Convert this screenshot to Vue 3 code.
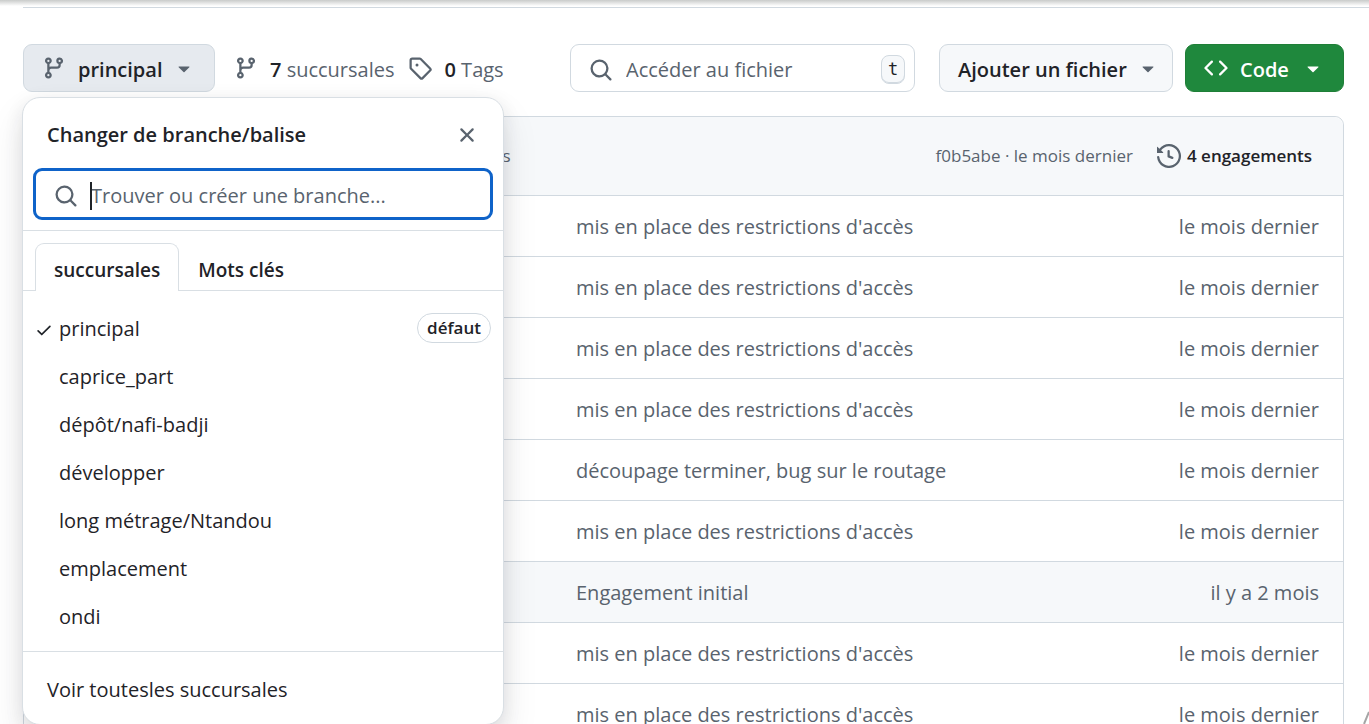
<script setup>
import { ref } from 'vue'

const icons = {
  branch: 'M9.5 3.25a2.25 2.25 0 1 1 3 2.122V6A2.5 2.5 0 0 1 10 8.5H6a1 1 0 0 0-1 1v1.128a2.251 2.251 0 1 1-1.5 0V5.372a2.25 2.25 0 1 1 1.5 0v1.836A2.493 2.493 0 0 1 6 7h4a1 1 0 0 0 1-1v-.628A2.25 2.25 0 0 1 9.5 3.25Zm-6 0a.75.75 0 1 0 1.5 0 .75.75 0 0 0-1.5 0Zm8.25-.75a.75.75 0 1 0 0 1.5.75.75 0 0 0 0-1.5ZM4.25 12a.75.75 0 1 0 0 1.5.75.75 0 0 0 0-1.5Z',
  tag: 'M1 7.775V2.75C1 1.784 1.784 1 2.75 1h5.025c.464 0 .91.184 1.238.513l6.25 6.25a1.75 1.75 0 0 1 0 2.474l-5.026 5.026a1.75 1.75 0 0 1-2.474 0l-6.25-6.25A1.752 1.752 0 0 1 1 7.775Zm1.5 0c0 .066.026.13.073.177l6.25 6.25a.25.25 0 0 0 .354 0l5.025-5.025a.25.25 0 0 0 0-.354l-6.25-6.25a.25.25 0 0 0-.177-.073H2.75a.25.25 0 0 0-.25.25ZM6 5a1 1 0 1 1 0 2 1 1 0 0 1 0-2Z',
  search: 'M10.68 11.74a6 6 0 0 1-7.922-8.982 6 6 0 0 1 8.982 7.922l3.04 3.04a.749.749 0 0 1-.326 1.275.749.749 0 0 1-.734-.215ZM11.5 7a4.499 4.499 0 1 0-8.997 0A4.499 4.499 0 0 0 11.5 7Z',
  code: 'm11.28 3.22 4.25 4.25a.75.75 0 0 1 0 1.06l-4.25 4.25a.749.749 0 0 1-1.275-.326.749.749 0 0 1 .215-.734L13.94 8l-3.72-3.72a.749.749 0 0 1 .326-1.275.749.749 0 0 1 .734.215Zm-6.56 0a.751.751 0 0 1 1.042.018.751.751 0 0 1 .018 1.042L2.06 8l3.72 3.72a.749.749 0 0 1-.326 1.275.749.749 0 0 1-.734-.215L.47 8.53a.75.75 0 0 1 0-1.06Z',
  caret: 'm4.427 7.427 3.396 3.396a.25.25 0 0 0 .354 0l3.396-3.396A.25.25 0 0 0 11.396 7H4.604a.25.25 0 0 0-.177.427Z',
  history: 'm.427 1.927 1.215 1.215a8.002 8.002 0 1 1-1.6 5.685.75.75 0 1 1 1.493-.154 6.5 6.5 0 1 0 1.18-4.458l1.358 1.358A.25.25 0 0 1 3.896 6H.25A.25.25 0 0 1 0 5.75V2.104a.25.25 0 0 1 .427-.177ZM7.75 4a.75.75 0 0 1 .75.75v2.992l2.028.812a.75.75 0 0 1-.557 1.392l-2.5-1A.751.751 0 0 1 7 8.25v-3.5A.75.75 0 0 1 7.75 4Z',
  close: 'M3.72 3.72a.75.75 0 0 1 1.06 0L8 6.94l3.22-3.22a.749.749 0 0 1 1.275.326.749.749 0 0 1-.215.734L9.06 8l3.22 3.22a.749.749 0 0 1-.326 1.275.749.749 0 0 1-.734-.215L8 9.06l-3.22 3.22a.751.751 0 0 1-1.042-.018.751.751 0 0 1-.018-1.042L6.94 8 3.72 4.78a.75.75 0 0 1 0-1.06Z',
  check: 'M13.78 4.22a.75.75 0 0 1 0 1.06l-7.25 7.25a.75.75 0 0 1-1.06 0L2.22 9.28a.751.751 0 0 1 .018-1.042.751.751 0 0 1 1.042-.018L6 10.94l6.72-6.72a.75.75 0 0 1 1.06 0Z',
}

const message = "mis en place des restrictions d'accès"
const lastMonth = 'le mois dernier'
const rows = [
  { message, date: lastMonth },
  { message, date: lastMonth },
  { message, date: lastMonth },
  { message, date: lastMonth },
  { message: 'découpage terminer, bug sur le routage', date: lastMonth },
  { message, date: lastMonth },
  { message: 'Engagement initial', date: 'il y a 2 mois', hover: true },
  { message, date: lastMonth },
  { message, date: lastMonth },
]

const branches = ['principal', 'caprice_part', 'dépôt/nafi-badji', 'développer', 'long métrage/Ntandou', 'emplacement', 'ondi']
const current = ref('principal')
const menuOpen = ref(true)
const query = ref('')
const fileQuery = ref('')
</script>

<template>
  <div class="page">
    <div class="top-edge"></div>
    <main class="repo">
      <div class="toolbar">
        <div class="branch-picker">
          <button type="button" class="btn btn-branch" :aria-expanded="menuOpen" @click="menuOpen = !menuOpen">
            <svg class="icon" viewBox="0 0 16 16"><path :d="icons.branch" /></svg>
            <span class="btn-label">principal</span>
            <svg class="icon" viewBox="0 0 16 16"><path :d="icons.caret" /></svg>
          </button>

          <section v-if="menuOpen" class="menu" aria-labelledby="menu-title">
            <header class="menu-head">
              <h2 id="menu-title">Changer de branche/balise</h2>
              <button type="button" class="close" aria-label="Fermer" @click="menuOpen = false">
                <svg class="icon" viewBox="0 0 16 16"><path :d="icons.close" /></svg>
              </button>
            </header>
            <div class="menu-search">
              <label class="field field-focus">
                <svg class="icon" viewBox="0 0 16 16"><path :d="icons.search" /></svg>
                <span class="text-caret"></span>
                <input v-model="query" type="text" aria-label="Trouver ou créer une branche" placeholder="Trouver ou créer une branche..." />
              </label>
            </div>
            <div class="tabs" role="tablist">
              <button type="button" class="tab tab-active" role="tab" aria-selected="true">succursales</button>
              <button type="button" class="tab" role="tab" aria-selected="false">Mots clés</button>
            </div>
            <ul class="branches">
              <li v-for="name in branches" :key="name">
                <button type="button" class="branch" @click="current = name">
                  <span class="mark">
                    <svg v-if="name === current" class="icon-check" viewBox="0 0 16 16"><path :d="icons.check" /></svg>
                  </span>
                  <span class="branch-name">{{ name }}</span>
                  <span v-if="name === 'principal'" class="badge">défaut</span>
                </button>
              </li>
            </ul>
            <a class="all-branches" href="#branches">Voir toutesles succursales</a>
          </section>
        </div>

        <nav class="counts">
          <a href="#branches"><svg class="icon" viewBox="0 0 16 16"><path :d="icons.branch" /></svg><span class="count"><b>7</b> succursales</span></a>
          <a href="#tags"><svg class="icon" viewBox="0 0 16 16"><path :d="icons.tag" /></svg><span class="count"><b>0</b> Tags</span></a>
        </nav>

        <label class="field file-search">
          <svg class="icon" viewBox="0 0 16 16"><path :d="icons.search" /></svg>
          <input v-model="fileQuery" type="text" aria-label="Accéder au fichier" placeholder="Accéder au fichier" />
          <kbd>t</kbd>
        </label>
        <button type="button" class="btn btn-add">
          <span class="btn-label">Ajouter un fichier</span>
          <svg class="icon" viewBox="0 0 16 16"><path :d="icons.caret" /></svg>
        </button>
        <button type="button" class="btn btn-code">
          <svg class="icon" viewBox="0 0 16 16"><path :d="icons.code" /></svg>
          <span class="btn-label">Code</span>
          <svg class="icon" viewBox="0 0 16 16"><path :d="icons.caret" /></svg>
        </button>
      </div>

      <section class="files">
        <header class="commit-bar">
          <a class="commit-message" href="#commit">{{ message }}</a>
          <span class="commit-meta">f0b5abe · le mois dernier</span>
          <a class="commit-count" href="#commits"><svg class="icon" viewBox="0 0 16 16"><path :d="icons.history" /></svg>4 engagements</a>
        </header>
        <table>
          <tbody>
            <tr v-for="(row, i) in rows" :key="i" :class="{ hover: row.hover }">
              <td class="col-name"></td>
              <td class="col-message"><a href="#commit">{{ row.message }}</a></td>
              <td class="col-date">{{ row.date }}</td>
            </tr>
          </tbody>
        </table>
      </section>
    </main>
    <svg class="corner" viewBox="0 0 6 14"><path d="M1 14 6 2" /></svg>
  </div>
</template>

<style>
html {
  overflow: hidden;
}
</style>

<style scoped>
.page {
  min-height: 100vh;
  background: #fff;
  color: #1f2328;
  font: 20px/30px "Open Sans", "Noto Sans", sans-serif;
}
.page * {
  box-sizing: border-box;
}
.top-edge {
  height: 8px;
  margin-left: 23px;
  border-bottom: 1px solid #d1d9e0;
}
.page::before {
  content: "";
  position: absolute;
  inset: 0 0 auto;
  height: 6px;
  background: linear-gradient(#c9cbca, #fff);
}
.repo {
  padding: 36px 25px 0 23px;
}
button,
input {
  font: inherit;
  color: inherit;
}
a {
  color: inherit;
  text-decoration: none;
}
.icon {
  display: block;
  flex: none;
  width: 24px;
  height: 24px;
  fill: #59636e;
}
.toolbar {
  display: flex;
  align-items: center;
  height: 48px;
}
.branch-picker {
  position: relative;
}
.btn {
  display: flex;
  align-items: center;
  height: 48px;
  padding: 0 18px;
  border: 1px solid #d1d9e0;
  border-radius: 9px;
  background: #f6f8fa;
  font-weight: 600;
  white-space: nowrap;
}
.btn-label {
  flex: 1;
  padding-top: 3px;
  text-align: left;
}
.btn-branch {
  width: 192px;
  background: #e6eaef;
}
.btn-branch .btn-label {
  padding-left: 12px;
}
.counts {
  display: flex;
  flex: 1;
  color: #59636e;
  font-weight: 500;
  white-space: nowrap;
}
.counts a {
  display: flex;
  align-items: center;
  margin-left: 19px;
}
.counts a + a {
  margin-left: 14px;
}
.count {
  padding: 3px 0 0 12px;
}
.counts b {
  color: #1f2328;
  font-weight: 600;
}
.field {
  display: flex;
  align-items: center;
  height: 48px;
  border: 1px solid #d1d9e0;
  border-radius: 9px;
  background: #fff;
}
.field input {
  flex: 1;
  min-width: 0;
  padding: 0;
  border: 0;
  outline: 0;
  background: none;
}
.field input::placeholder {
  color: #59636e;
  opacity: 1;
}
.file-search {
  width: 345px;
  padding: 3px 9px 0 18px;
}
.file-search input {
  margin-left: 13px;
}
kbd {
  width: 24px;
  height: 29px;
  border: 1px solid #d1d9e0;
  border-radius: 8px;
  box-shadow: inset 0 -1px 0 #d1d9e0;
  background: #f6f8fa;
  font: 17px/26px "DejaVu Sans Mono", monospace;
  text-align: center;
}
.btn-add {
  width: 234px;
  margin-left: 24px;
  padding-right: 12px;
}
.btn-code {
  width: 159px;
  margin-left: 12px;
  border-color: #1f7f37;
  background: #1f883d;
  color: #fff;
}
.btn-code .icon {
  fill: #fff;
}
.btn-code .btn-label {
  padding-left: 12px;
}

.menu {
  position: absolute;
  z-index: 2;
  top: 53px;
  left: -1px;
  width: 482px;
  border: 1px solid #d9dfe4;
  border-radius: 18px;
  background: #fff;
  box-shadow: 0 6px 18px rgba(37, 41, 46, 0.1), 0 18px 36px rgba(37, 41, 46, 0.1);
}
.menu-head {
  display: flex;
  align-items: center;
  justify-content: space-between;
  height: 70px;
  padding: 3px 24px 0;
}
.menu-head h2 {
  margin: 0;
  font-size: 20px;
  font-weight: 600;
}
.close {
  padding: 0;
  border: 0;
  background: none;
}
.menu-search {
  padding: 0 10px 10px;
  border-bottom: 1px solid #d9dfe4;
}
.field-focus {
  position: relative;
  height: 52px;
  padding: 3px 18px 0;
  border: 3px solid #0f63c9;
}
.field-focus input {
  margin-left: 13px;
  caret-color: transparent;
}
.text-caret {
  position: absolute;
  left: 54px;
  width: 2px;
  height: 28px;
  background: #1f2328;
}
.tabs {
  display: flex;
  padding: 12px 12px 0;
  box-shadow: inset 0 -1px 0 #d9dfe4;
}
.tab {
  height: 48px;
  padding: 4px 18px 0;
  border: 1px solid transparent;
  border-bottom: 0;
  border-radius: 9px 9px 0 0;
  background: none;
  font-size: 19px;
  font-weight: 600;
}
.tab-active {
  border-color: #d9dfe4;
  background: #fff;
}
.branches {
  margin: 0;
  padding: 13px 0 11px;
  border-bottom: 1px solid #d9dfe4;
  list-style: none;
}
.branch {
  display: flex;
  align-items: center;
  width: 100%;
  height: 48px;
  padding: 0 12px;
  border: 0;
  background: none;
  text-align: left;
}
.mark {
  width: 24px;
  padding-top: 4px;
}
.icon-check {
  display: block;
  width: 18px;
  height: 18px;
  fill: #1f2328;
}
.branch-name {
  flex: 1;
  padding-top: 2px;
}
.badge {
  padding: 0 9px;
  border: 1px solid #d1d9e0;
  border-radius: 15px;
  font-size: 17px;
  font-weight: 600;
  line-height: 28px;
}
.all-branches {
  display: block;
  padding: 23px 24px 19px;
}

.files {
  margin-top: 24px;
  border: 1px solid #d1d9e0;
  border-radius: 9px 9px 0 0;
}
.commit-bar {
  display: flex;
  align-items: center;
  height: 78px;
  padding: 0 31px 0 200px;
  border-radius: 9px 9px 0 0;
  background: #f6f8fa;
  color: #59636e;
  font-size: 17px;
}
.commit-message {
  flex: 1;
}
.commit-count {
  display: flex;
  align-items: center;
  gap: 6px;
  margin-left: 24px;
  color: #1f2328;
  font-weight: 600;
}
table {
  width: 100%;
  border-spacing: 0;
  table-layout: fixed;
  color: #59636e;
}
td {
  height: 61px;
  padding: 2px 0 0;
  border-top: 1px solid #d1d9e0;
}
.hover td {
  background: #f6f8fa;
}
.col-name {
  width: 552px;
}
.col-date {
  width: 200px;
  padding-right: 24px;
  text-align: right;
}
.corner {
  position: fixed;
  right: 0;
  bottom: 0;
  width: 6px;
  height: 14px;
  fill: none;
  stroke: #a5a5a5;
  stroke-width: 2;
}
</style>
